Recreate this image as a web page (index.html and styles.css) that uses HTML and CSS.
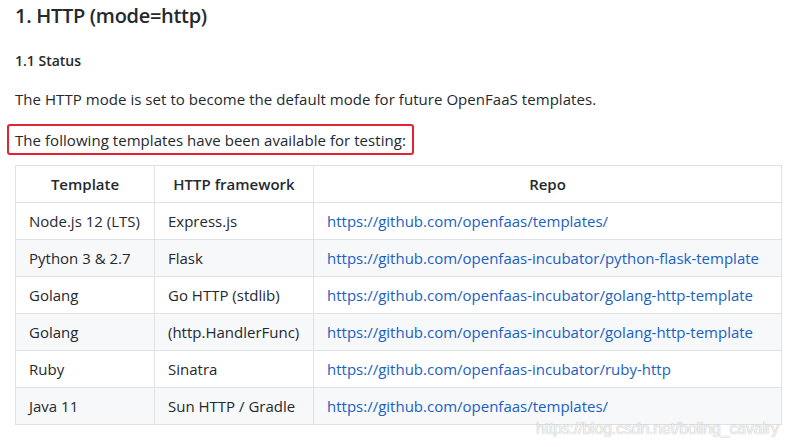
FILE: index.html
```html
<!DOCTYPE html>
<html lang="en">
<head>
<meta charset="utf-8">
<link rel="stylesheet" href="styles.css">
</head>
<body>
<div class="doc">
  <h2 class="h2">1. HTTP (mode=http)</h2>
  <h3 class="h3">1.1 Status</h3>
  <p class="para">The HTTP mode is set to become the default mode for future OpenFaaS templates.</p>
  <p class="para boxed"><span class="mark">The following templates have been available for testing:</span></p>
  <table class="tbl">
    <colgroup>
      <col class="c1"><col class="c2"><col class="c3">
    </colgroup>
    <thead>
      <tr><th>Template</th><th>HTTP framework</th><th>Repo</th></tr>
    </thead>
    <tbody>
      <tr><td>Node.js 12 (LTS)</td><td>Express.js</td><td><a class="lnk" href="#">https://github.com/openfaas/templates/</a></td></tr>
      <tr><td>Python 3 &amp; 2.7</td><td>Flask</td><td><a class="lnk" href="#">https://github.com/openfaas-incubator/python-flask-template</a></td></tr>
      <tr><td>Golang</td><td>Go HTTP (stdlib)</td><td><a class="lnk" href="#">https://github.com/openfaas-incubator/golang-http-template</a></td></tr>
      <tr><td>Golang</td><td>(http.HandlerFunc)</td><td><a class="lnk" href="#">https://github.com/openfaas-incubator/golang-http-template</a></td></tr>
      <tr><td>Ruby</td><td>Sinatra</td><td><a class="lnk" href="#">https://github.com/openfaas-incubator/ruby-http</a></td></tr>
      <tr><td>Java 11</td><td>Sun HTTP / Gradle</td><td><a class="lnk" href="#">https://github.com/openfaas/templates/</a></td></tr>
    </tbody>
  </table>
</div>
<div class="watermark">https://blog.csdn.net/boling_cavalry</div>
</body>
</html>
```
FILE: styles.css
```css
html, body {
  margin: 0;
  padding: 0;
  background: #ffffff;
}
body {
  font-family: "Open Sans", "Noto Sans", sans-serif;
  color: #24292e;
  font-size: 15px;
  position: relative;
  width: 793px;
  height: 447px;
  overflow: hidden;
}
.doc {
  padding: 1px 12px 0 15px;
}
.h2 {
  margin: 0;
  font-size: 20px;
  font-weight: 600;
  line-height: 30px;
  letter-spacing: -0.3px;
}
.h3 {
  margin: 18px 0 0;
  font-size: 14px;
  font-weight: 600;
  line-height: 24px;
}
.para {
  margin: 14px 0 0;
  line-height: 24px;
  letter-spacing: 0.05px;
}
.boxed {
  margin-top: 13px;
}
.mark {
  display: inline-block;
  margin-left: -8px;
  padding: 2px 6px 1px 6px;
  border: 2.5px solid #e3232f;
  border-radius: 3px;
}
.tbl {
  margin-top: 10px;
  border-collapse: collapse;
  table-layout: fixed;
  width: 767px;
}
.c1 { width: 139px; }
.c2 { width: 159px; }
.tbl th, .tbl td {
  border: 1px solid #dfe2e5;
  padding: 6px 13px;
  line-height: 24px;
  text-align: left;
  white-space: nowrap;
}
.tbl th {
  font-weight: 600;
  text-align: center;
}
.tbl tbody tr:nth-child(even) {
  background: #f6f8fa;
}
.lnk {
  color: #1a5fc2;
  text-decoration: none;
}
.watermark {
  position: absolute;
  left: 536px;
  top: 420px;
  font-family: "Liberation Sans", Arial, sans-serif;
  font-size: 16px;
  color: rgba(255, 255, 255, 0.85);
  text-shadow: 0 0 1px rgba(120, 120, 120, 0.7);
  letter-spacing: -0.2px;
}
```
